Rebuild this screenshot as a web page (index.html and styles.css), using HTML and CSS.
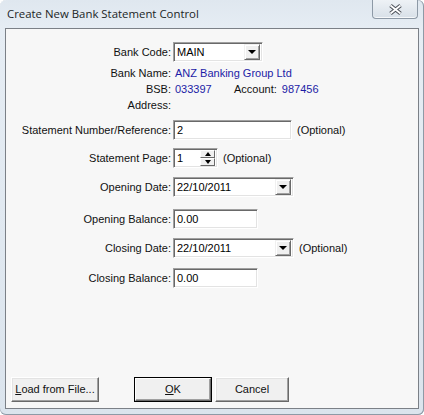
FILE: index.html
```html
<!DOCTYPE html>
<html>

<head>
    <meta charset="utf-8">
    <title>Create New Bank Statement Control</title>
    <link rel="stylesheet" href="styles.css">
</head>

<body>
    <div class="window">
        <div class="titlebar">
            <span class="title">Create New Bank Statement Control</span>
            <span class="close">
                <svg width="15" height="11" viewBox="0 0 15 11">
                    <line x1="2.5" y1="1.5" x2="12.5" y2="9.5" stroke="#4a4f57" stroke-width="3.8" />
                    <line x1="12.5" y1="1.5" x2="2.5" y2="9.5" stroke="#4a4f57" stroke-width="3.8" />
                    <line x1="2.5" y1="1.5" x2="12.5" y2="9.5" stroke="#fff" stroke-width="1.8" />
                    <line x1="12.5" y1="1.5" x2="2.5" y2="9.5" stroke="#fff" stroke-width="1.8" />
                </svg>
            </span>
        </div>
        <div class="panel">
            <div class="row first">
                <span class="lbl">Bank Code:</span>
                <div class="field combo w-code"><span class="val">MAIN</span><span class="drop"><i class="arrow"></i></span></div>
            </div>
            <div class="info name">
                <span class="lbl">Bank Name:</span>
                <span class="blue">ANZ Banking Group Ltd</span>
            </div>
            <div class="info">
                <span class="lbl">BSB:</span>
                <span class="blue bsb">033397</span>
                <span class="acct">Account:</span>
                <span class="blue acct-no">987456</span>
            </div>
            <div class="info">
                <span class="lbl">Address:</span>
            </div>
            <div class="row r-ref">
                <span class="lbl">Statement Number/Reference:</span>
                <div class="field w-ref"><span class="val">2</span></div>
                <span class="opt">(Optional)</span>
            </div>
            <div class="row r-page">
                <span class="lbl">Statement Page:</span>
                <div class="field w-page"><span class="val">1</span>
                    <span class="spin"><span class="spin-btn"><i class="up"></i></span><span class="spin-btn"><i class="arrow"></i></span></span>
                </div>
                <span class="opt">(Optional)</span>
            </div>
            <div class="row r-open">
                <span class="lbl">Opening Date:</span>
                <div class="field combo w-date"><span class="val">22/10/2011</span><span class="drop"><i class="arrow"></i></span></div>
            </div>
            <div class="row r-obal">
                <span class="lbl">Opening Balance:</span>
                <div class="field w-bal"><span class="val">0.00</span></div>
            </div>
            <div class="row r-close">
                <span class="lbl">Closing Date:</span>
                <div class="field combo w-date"><span class="val">22/10/2011</span><span class="drop"><i class="arrow"></i></span></div>
                <span class="opt">(Optional)</span>
            </div>
            <div class="row r-cbal">
                <span class="lbl">Closing Balance:</span>
                <div class="field w-bal"><span class="val">0.00</span></div>
            </div>
            <div class="buttons">
                <a class="btn btn-load" href="javascript:;"><u>L</u>oad from File...</a>
                <a class="btn btn-ok" href="javascript:;"><span><u>O</u>K</span></a>
                <a class="btn btn-cancel" href="javascript:;">Cancel</a>
            </div>
        </div>
    </div>
</body>

</html>
```

FILE: styles.css
```css
* {
    margin: 0;
    padding: 0;
    box-sizing: border-box;
}

body {
    font: 11px/1.3 "Liberation Sans", Arial, sans-serif;
    color: #111;
    background: #fff;
}

a {
    color: #111;
    text-decoration: none;
}

.window {
    width: 424px;
    height: 415px;
    padding: 0 5px 6px 5px;
    display: flex;
    flex-direction: column;
    border-radius: 6px;
    background: linear-gradient(180deg, #dfe7ef 0, #e6edf4 30px, #dbe4ed 100%);
    box-shadow: inset -1px 0 0 #8e9aa6, inset 0 -1px 0 #8e9aa6;
}

.titlebar {
    height: 28px;
    display: flex;
    align-items: flex-start;
    justify-content: space-between;
}

.title {
    font: 11.4px/28px "Open Sans", "Noto Sans", sans-serif;
    color: #1b1f26;
    padding-left: 2px;
}

.close {
    width: 46px;
    height: 19px;
    margin-right: 1px;
    display: flex;
    align-items: center;
    justify-content: center;
    border: 1px solid #8d99a6;
    border-top: 0;
    border-radius: 0 0 4px 4px;
    background: linear-gradient(180deg, #eef2f6 0, #e3e9ef 50%, #d8e0e8 100%);
    box-shadow: inset 0 -1px 0 #f6f8fa;
}

.panel {
    flex: 1;
    display: flex;
    flex-direction: column;
    background: #f7f7f7;
    border: 1px solid #7b8087;
    padding: 13px 0 6px 0;
}

.row {
    display: flex;
    align-items: center;
    height: 20px;
}

.lbl {
    width: 165px;
    margin-right: 2px;
    text-align: right;
    white-space: nowrap;
}

.info {
    display: flex;
    line-height: 16px;
}

.info.name {
    margin-top: 3px;
}

.blue {
    color: #1c1ca6;
    padding-left: 2px;
}

.bsb {
    width: 59px;
}

.acct {
    padding-left: 2px;
}

.acct-no {
    padding-left: 5px;
}

.r-ref {
    margin-top: 7px;
}

.r-page {
    margin-top: 8px;
}

.r-open {
    margin-top: 9px;
}

.r-obal {
    margin-top: 12px;
}

.r-close {
    margin-top: 9px;
}

.r-cbal {
    margin-top: 10px;
}

.field {
    height: 20px;
    display: flex;
    align-items: center;
    background: #fff;
    border: 1px solid;
    border-color: #a0a0a0 #fff #fff #a0a0a0;
    box-shadow: inset 1px 1px 0 #696969, inset -1px -1px 0 #e3e3e3;
    padding: 2px 2px 2px 3px;
}

.field .val {
    flex: 1;
    color: #000;
    font-size: 11px;
}

.w-code {
    width: 90px;
}

.w-ref {
    width: 119px;
}

.w-page {
    width: 45px;
}

.w-date {
    width: 121px;
}

.w-bal {
    width: 85px;
}

.opt {
    margin-left: 5px;
    white-space: nowrap;
}

.drop {
    width: 16px;
    height: 16px;
    display: flex;
    align-items: center;
    justify-content: center;
    background: #f0f0f0;
    border: 1px solid;
    border-color: #f0f0f0 #696969 #696969 #f0f0f0;
    box-shadow: inset 1px 1px 0 #fff, inset -1px -1px 0 #a0a0a0;
}

.arrow {
    width: 0;
    height: 0;
    border-left: 4px solid transparent;
    border-right: 4px solid transparent;
    border-top: 4px solid #000;
}

.up {
    width: 0;
    height: 0;
    border-left: 4px solid transparent;
    border-right: 4px solid transparent;
    border-bottom: 4px solid #000;
}

.spin {
    width: 15px;
    height: 16px;
    display: flex;
    flex-direction: column;
}

.spin-btn {
    flex: 1;
    display: flex;
    align-items: center;
    justify-content: center;
    background: #f0f0f0;
    border: 1px solid;
    border-color: #fff #696969 #696969 #fff;
}

.spin-btn .arrow,
.spin-btn .up {
    border-left-width: 3px;
    border-right-width: 3px;
}

.buttons {
    margin-top: auto;
    display: flex;
    align-items: center;
    padding-left: 5px;
}

.btn {
    height: 25px;
    display: flex;
    align-items: center;
    justify-content: center;
    background: #f0f0f0;
    border: 1px solid;
    border-color: #fff #696969 #696969 #fff;
    box-shadow: inset -1px -1px 0 #a0a0a0, inset 1px 1px 0 #e3e3e3;
}

.btn-load {
    width: 88px;
}

.btn-ok {
    width: 78px;
    margin-left: 35px;
    border: 1px solid #000;
    box-shadow: none;
    padding: 0;
}

.btn-ok span {
    width: 100%;
    height: 100%;
    display: flex;
    align-items: center;
    justify-content: center;
    border: 1px solid;
    border-color: #fff #696969 #696969 #fff;
    box-shadow: inset -1px -1px 0 #a0a0a0;
}

.btn-cancel {
    width: 74px;
    margin-left: 3px;
}
```
